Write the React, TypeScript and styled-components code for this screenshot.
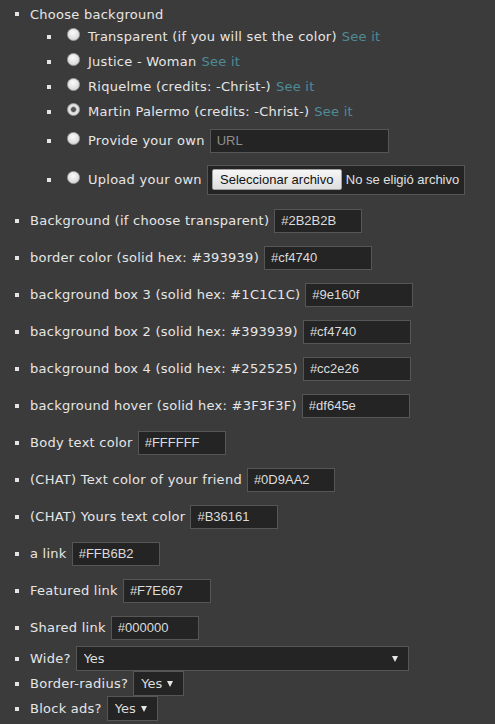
import styled, { createGlobalStyle } from 'styled-components';

const GlobalStyle = createGlobalStyle`
  body {
    margin: 0;
    background: #3b3b3b;
    color: #e6e6e6;
    font-family: 'DejaVu Sans', Verdana, sans-serif;
    font-size: 13px;
    letter-spacing: 0.26px;
  }
`;

const Main = styled.div`
  padding-top: 4px;
`;

interface IListProps {
  indent: number;
}
const List = styled.ul<IListProps>`
  list-style: none;
  margin: 0;
  padding: 0 0 0 ${(props) => props.indent}px;
`;

interface IItemProps {
  h: number;
}
const Item = styled.li<IItemProps>`
  display: flex;
  align-items: center;
  height: ${(props) => props.h}px;
  white-space: nowrap;

  &::before {
    content: '';
    flex: none;
    width: 4px;
    height: 4px;
    margin-right: 11px;
    background: #e4e4e4;
  }
`;

const Group = styled.li`
  display: block;
`;

const Radio = styled.input.attrs({ type: 'radio', name: 'bg' })`
  appearance: none;
  flex: none;
  width: 13px;
  height: 13px;
  margin: 0 8px 4px 5px;
  border-radius: 50%;
  border: 1px solid #a8a8a8;
  box-sizing: border-box;
  background: radial-gradient(circle at 45% 35%, #fafafa 0%, #e2e2e2 55%, #c9c9c9 100%);

  &:checked {
    background: radial-gradient(circle, #555 0 2px, #9a9a9a 2.5px, #e6e6e6 3.5px, #cfcfcf 100%);
  }
`;

const SeeIt = styled.a`
  color: #4d8c97;
  text-decoration: none;
  margin-left: 5px;
`;

interface IFieldProps {
  w: number;
}
const TextField = styled.input<IFieldProps>`
  width: ${(props) => props.w}px;
  height: 24px;
  box-sizing: border-box;
  margin-left: 5px;
  padding: 0 6px;
  background: #242424;
  border: 1px solid #565656;
  color: #dcdcdc;
  font-family: 'Liberation Sans', Arial, sans-serif;
  font-size: 13px;
  letter-spacing: 0;
  outline: none;

  &::placeholder {
    color: #8e8e8e;
  }
`;

const FileBox = styled.label`
  display: flex;
  align-items: center;
  width: 258px;
  height: 30px;
  box-sizing: border-box;
  margin-left: 5px;
  padding: 0 4px;
  background: #242424;
  border: 1px solid #565656;
  font-family: 'Liberation Sans', Arial, sans-serif;
  font-size: 13px;
  letter-spacing: 0;
  color: #e0e0e0;

  input {
    display: none;
  }
`;

const FileButton = styled.span`
  display: flex;
  align-items: center;
  justify-content: center;
  width: 130px;
  height: 21px;
  box-sizing: border-box;
  margin-right: 4px;
  border: 1px solid #a0a0a0;
  border-radius: 2px;
  background: linear-gradient(#f6f6f6, #dedede);
  color: #111;
`;

const SelectWrap = styled.span<IFieldProps>`
  display: flex;
  align-items: center;
  width: ${(props) => props.w}px;
  height: 25px;
  box-sizing: border-box;
  margin-left: 5px;
  padding: 0 10px 0 7px;
  background: #242424;
  border: 1px solid #565656;

  select {
    flex: 1;
    appearance: none;
    border: 0;
    padding: 0;
    background: transparent;
    color: #dcdcdc;
    font-family: 'DejaVu Sans', Verdana, sans-serif;
    font-size: 13px;
    outline: none;
  }

  &::after {
    content: '';
    width: 0;
    height: 0;
    border-left: 3px solid transparent;
    border-right: 3px solid transparent;
    border-top: 6px solid #e6e6e6;
  }
`;

const choices = [
  { label: 'Transparent (if you will set the color)', checked: false },
  { label: 'Justice - Woman', checked: false },
  { label: 'Riquelme (credits: -Christ-)', checked: false },
  { label: 'Martin Palermo (credits: -Christ-)', checked: true },
];

const colorRows = [
  { label: 'Background (if choose transparent)', value: '#2B2B2B', w: 88 },
  { label: 'border color (solid hex: #393939)', value: '#cf4740', w: 108 },
  { label: 'background box 3 (solid hex: #1C1C1C)', value: '#9e160f', w: 108 },
  { label: 'background box 2 (solid hex: #393939)', value: '#cf4740', w: 108 },
  { label: 'background box 4 (solid hex: #252525)', value: '#cc2e26', w: 108 },
  { label: 'background hover (solid hex: #3F3F3F)', value: '#df645e', w: 108 },
  { label: 'Body text color', value: '#FFFFFF', w: 88 },
  { label: '(CHAT) Text color of your friend', value: '#0D9AA2', w: 88 },
  { label: '(CHAT) Yours text color', value: '#B36161', w: 88 },
  { label: 'a link', value: '#FFB6B2', w: 88 },
  { label: 'Featured link', value: '#F7E667', w: 88 },
  { label: 'Shared link', value: '#000000', w: 88 },
];

const selectRows = [
  { label: 'Wide?', w: 333 },
  { label: 'Border-radius?', w: 51 },
  { label: 'Block ads?', w: 51 },
];

function App() {
  return (
    <Main>
      <GlobalStyle />
      <List indent={15}>
        <Group>
          <Item as="div" h={20}>
            Choose background
          </Item>
          <List indent={32}>
            {choices.map((c) => (
              <Item key={c.label} h={25}>
                <Radio defaultChecked={c.checked} />
                {c.label}
                <SeeIt href="#">See it</SeeIt>
              </Item>
            ))}
            <Item h={33}>
              <Radio />
              Provide your own
              <TextField w={179} placeholder="URL" />
            </Item>
            <Item h={45}>
              <Radio />
              Upload your own
              <FileBox>
                <input type="file" />
                <FileButton>Seleccionar archivo</FileButton>
                No se eligió archivo
              </FileBox>
            </Item>
          </List>
        </Group>
        {colorRows.map((r) => (
          <Item key={r.label} h={37}>
            {r.label}
            <TextField w={r.w} defaultValue={r.value} />
          </Item>
        ))}
        {selectRows.map((r) => (
          <Item key={r.label} h={25}>
            {r.label}
            <SelectWrap w={r.w}>
              <select defaultValue="yes">
                <option value="yes">Yes</option>
                <option value="no">No</option>
              </select>
            </SelectWrap>
          </Item>
        ))}
      </List>
    </Main>
  );
}

export default App;
